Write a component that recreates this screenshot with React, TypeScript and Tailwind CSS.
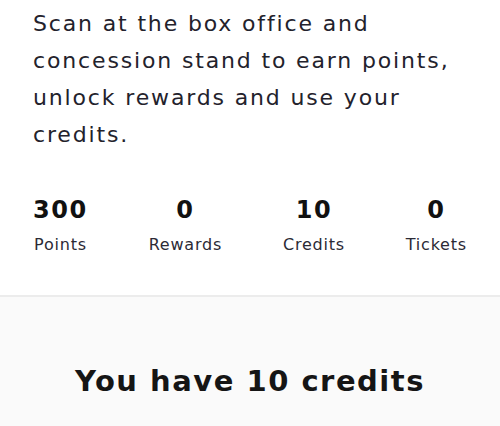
import React from 'react';

type Stat = { value: string; label: string };

const stats: Stat[] = [
    { value: "300", label: "Points" },
    { value: "0", label: "Rewards" },
    { value: "10", label: "Credits" },
    { value: "0", label: "Tickets" },
];

const App: React.FC = () => {
    return (
        <div className="min-h-screen flex flex-col bg-white text-[#23222c]" style={{ fontFamily: '"DejaVu Sans", Inter, sans-serif' }}>
            <div className="px-[33px] pt-[5px]">
                <p className="text-[22px] leading-[37px] tracking-[1.85px]">
                    Scan at the box office and concession stand to earn points, unlock rewards and use your credits.
                </p>

                <div className="flex justify-between mt-[42px] pb-[40px]">
                    {stats.map((stat) => (
                        <div key={stat.label} className="flex flex-col items-center">
                            <span className="text-[24px] leading-[30px] font-bold tracking-[1.6px] text-[#111]">{stat.value}</span>
                            <span className="text-[16px] leading-[20px] mt-[10px] tracking-[0.8px] text-[#2b2a35]">{stat.label}</span>
                        </div>
                    ))}
                </div>
            </div>

            <div className="flex-1 border-t-2 border-[#ececec] bg-[#fafafa] pt-[66px]">
                <h2 className="text-center text-[29px] leading-[36px] font-bold tracking-[1.5px] text-[#151515]">
                    You have 10 credits
                </h2>
            </div>
        </div>
    );
};

export default App;
